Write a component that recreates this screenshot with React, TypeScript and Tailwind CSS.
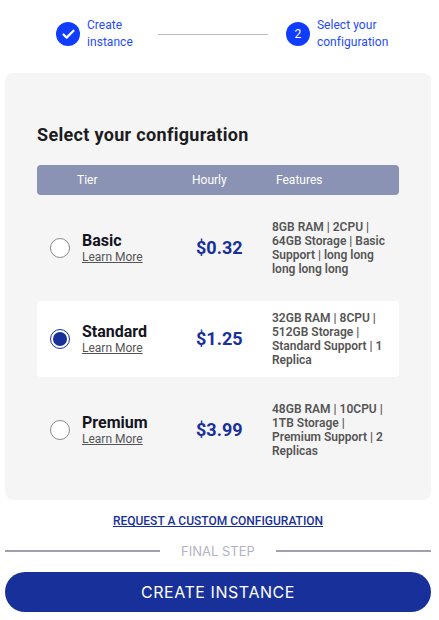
import { Check } from "lucide-react";

const tiers = [
  { name: "Basic", price: "$0.32", features: "8GB RAM | 2CPU | 64GB Storage | Basic Support | long long long long long", selected: false },
  { name: "Standard", price: "$1.25", features: "32GB RAM | 8CPU | 512GB Storage | Standard Support | 1 Replica", selected: true },
  { name: "Premium", price: "$3.99", features: "48GB RAM | 10CPU | 1TB Storage | Premium Support | 2 Replicas", selected: false },
];

function Step({ label, children }: { label: React.ReactNode; children: React.ReactNode }) {
  return (
    <div className="flex items-center gap-[7px]">
      <div className="w-6 h-6 rounded-full bg-[#0f3cff] text-white flex items-center justify-center text-xs shrink-0">
        {children}
      </div>
      <span className="text-xs leading-[17px] tracking-[0.05px] text-[#1f4bff]">{label}</span>
    </div>
  );
}

export default function App() {
  return (
    <div className="w-[439px] h-[620px] bg-white overflow-hidden font-['Roboto',sans-serif]">
      {/* Stepper */}
      <div className="h-[73px] pl-[56px] flex items-center pb-[5px]">
        <Step label={<>Create<br />instance</>}>
          <Check size={15} strokeWidth={3.5} />
        </Step>
        <div className="w-[110px] h-px bg-[#bbbbc4] ml-[25px] mr-[18px]" />
        <Step label={<>Select your<br />configuration</>}>2</Step>
      </div>

      {/* Panel */}
      <div className="mx-[5px] w-[426px] h-[427px] bg-[#f5f5f5] rounded-lg px-8 pt-[50px]">
        <h1 className="text-lg leading-6 font-bold tracking-[0.32px] text-[#1c1c1e]">Select your configuration</h1>
        <div className="mt-[18px] h-[30px] rounded bg-[#8b93b4] text-white text-xs flex items-center">
          <span className="w-[155px] pl-10">Tier</span>
          <span className="w-[84px]">Hourly</span>
          <span>Features</span>
        </div>
        <div className="mt-[15px] flex flex-col gap-[15px]">
          {tiers.map((t) => (
            <div key={t.name} className={`h-[76px] rounded flex items-center ${t.selected ? "bg-white" : ""}`}>
              <div className="w-[45px] pl-[13px] shrink-0">
                {t.selected ? (
                  <div className="w-5 h-5 rounded-full border border-[#18309a] bg-white flex items-center justify-center">
                    <div className="w-[14px] h-[14px] rounded-full bg-[#18309a]" />
                  </div>
                ) : (
                  <div className="w-5 h-5 rounded-full border border-[#8a8a8a] bg-white" />
                )}
              </div>
              <div className="w-[114px] shrink-0">
                <div className="text-base leading-[18px] font-bold text-[#14141e]">{t.name}</div>
                <div className="text-xs leading-[14px] text-[#555] underline">Learn More</div>
              </div>
              <div className="w-[76px] shrink-0 text-lg font-bold text-[#18309a]">{t.price}</div>
              <div className="w-[117px] text-xs leading-[14px] font-semibold text-[#555]">{t.features}</div>
            </div>
          ))}
        </div>
      </div>

      <div className="mx-[5px] w-[426px] mt-[14px] text-center text-xs leading-[14px] font-medium text-[#18309a] underline">
        REQUEST A CUSTOM CONFIGURATION
      </div>

      {/* Divider */}
      <div className="mx-[5px] w-[426px] mt-[13px] flex items-center">
        <div className="w-[155px] h-0.5 bg-[#a0a2b4]" />
        <span className="flex-1 text-center text-[13px] leading-5 text-[#b2b4c2] font-['Inter',sans-serif]">FINAL STEP</span>
        <div className="w-[155px] h-0.5 bg-[#a0a2b4]" />
      </div>

      <button className="block mx-[5px] mt-[11px] w-[426px] h-10 rounded-full bg-[#18309a] text-white text-base tracking-[0.55px] font-['Inter',sans-serif]">
        CREATE INSTANCE
      </button>
    </div>
  );
}
